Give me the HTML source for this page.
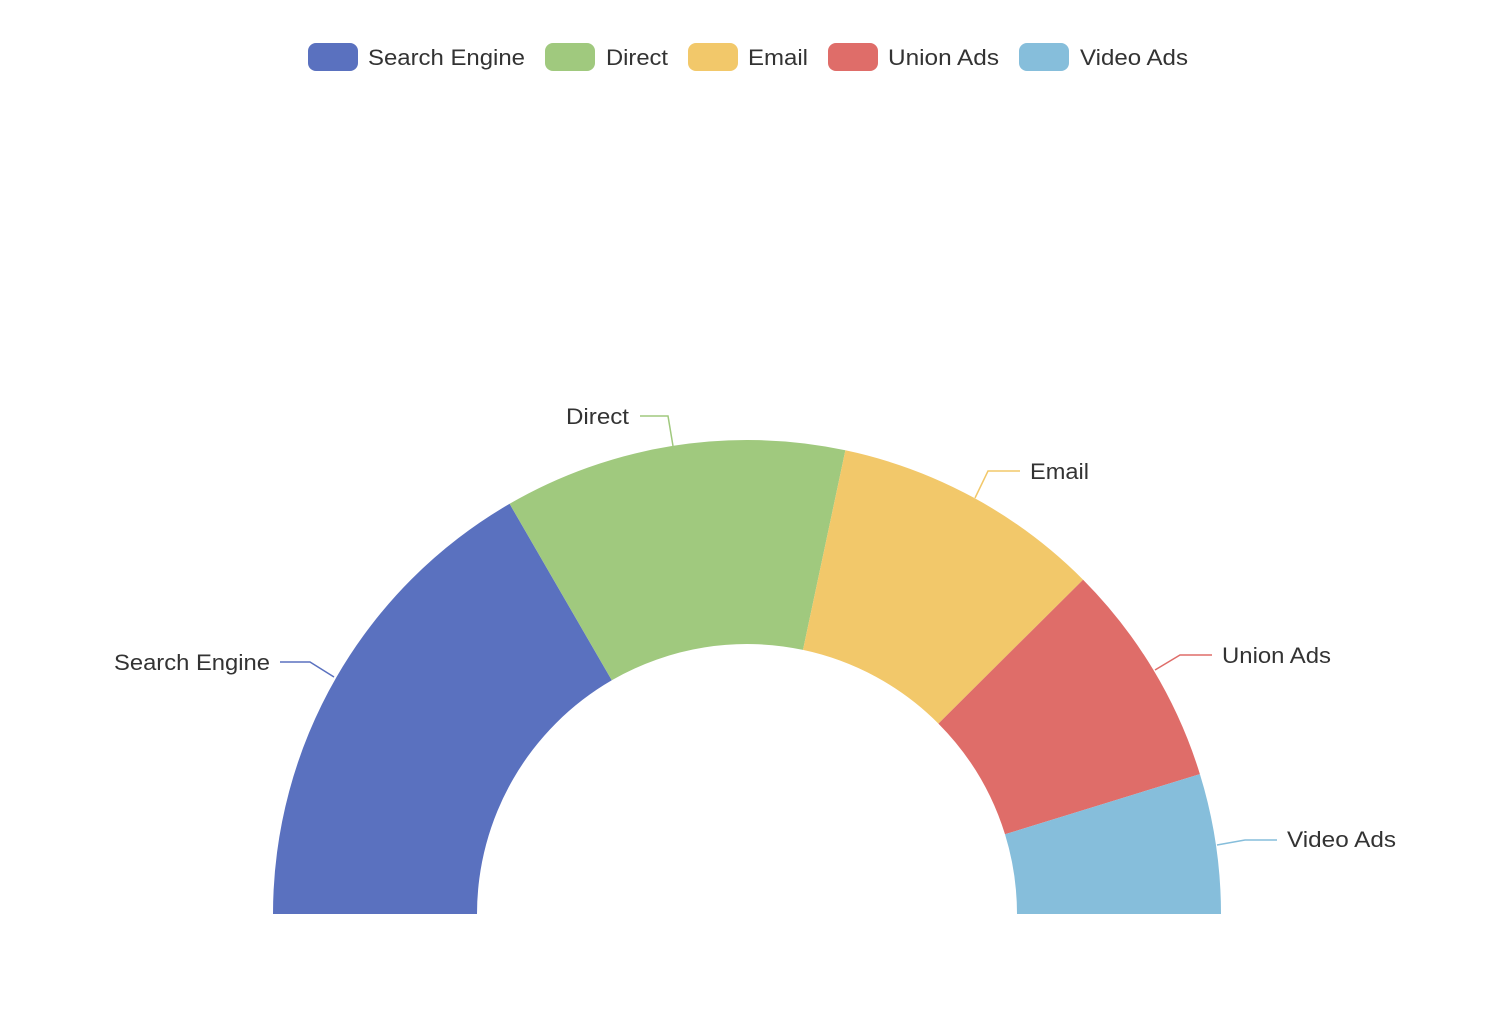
<!DOCTYPE html>
<html><head><meta charset="utf-8"><style>
html,body{margin:0;padding:0;background:#fff;}
svg{display:block;}
text{font-family:"Liberation Sans",sans-serif;fill:#333;}
</style></head><body>
<svg width="1494" height="1022" viewBox="0 0 1494 1022" xmlns="http://www.w3.org/2000/svg">
<g font-size="22">
<rect x="308" y="43" width="50" height="28" rx="8" fill="#5a71bf"/><text x="368" y="65" textLength="157" lengthAdjust="spacingAndGlyphs">Search Engine</text>
<rect x="545" y="43" width="50" height="28" rx="8" fill="#a0c97e"/><text x="606" y="65" textLength="62" lengthAdjust="spacingAndGlyphs">Direct</text>
<rect x="688" y="43" width="50" height="28" rx="8" fill="#f2c86a"/><text x="748" y="65" textLength="60" lengthAdjust="spacingAndGlyphs">Email</text>
<rect x="828" y="43" width="50" height="28" rx="8" fill="#df6d69"/><text x="888" y="65" textLength="111" lengthAdjust="spacingAndGlyphs">Union Ads</text>
<rect x="1019" y="43" width="50" height="28" rx="8" fill="#86bedb"/><text x="1080" y="65" textLength="108" lengthAdjust="spacingAndGlyphs">Video Ads</text>
</g>
<path d="M273,914 A474,474 0 0 1 509.6,503.8 L611.8,680.3 A270,270 0 0 0 477,914 Z" fill="#5a71bf"/>
<path d="M509.6,503.8 A474,474 0 0 1 845.4,450.3 L803,649.9 A270,270 0 0 0 611.8,680.3 Z" fill="#a0c97e"/>
<path d="M845.4,450.3 A474,474 0 0 1 1083.1,579.7 L938.4,723.6 A270,270 0 0 0 803,649.9 Z" fill="#f2c86a"/>
<path d="M1083.1,579.7 A474,474 0 0 1 1199.9,774.1 L1005,834.3 A270,270 0 0 0 938.4,723.6 Z" fill="#df6d69"/>
<path d="M1199.9,774.1 A474,474 0 0 1 1221,914 L1017,914 A270,270 0 0 0 1005,834.3 Z" fill="#86bedb"/>
<g fill="none" stroke-width="1.5">
<polyline points="334,677 310,662 280,662" stroke="#5a71bf"/>
<polyline points="673,446 668,416 640,416" stroke="#a0c97e"/>
<polyline points="975,498 988,471 1020,471" stroke="#f2c86a"/>
<polyline points="1155,670 1180,655 1212,655" stroke="#df6d69"/>
<polyline points="1217,845 1245,840 1277,840" stroke="#86bedb"/>
</g>
<g font-size="22">
<text x="114" y="670" textLength="156" lengthAdjust="spacingAndGlyphs">Search Engine</text>
<text x="566" y="424" textLength="63" lengthAdjust="spacingAndGlyphs">Direct</text>
<text x="1030" y="479" textLength="59" lengthAdjust="spacingAndGlyphs">Email</text>
<text x="1222" y="663" textLength="109" lengthAdjust="spacingAndGlyphs">Union Ads</text>
<text x="1287" y="847" textLength="109" lengthAdjust="spacingAndGlyphs">Video Ads</text>
</g>
</svg>
</body></html>
